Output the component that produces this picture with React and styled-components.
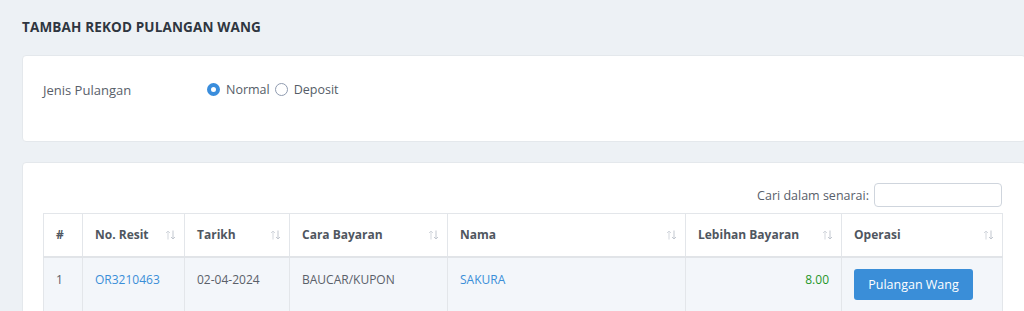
import React from "react";
import styled, { createGlobalStyle } from "styled-components";

const Global = createGlobalStyle`
  html, body { margin: 0; padding: 0; }
  body {
    background: #edf1f5;
    font-family: "Open Sans", "Noto Sans", sans-serif;
    overflow: hidden;
  }
  * { box-sizing: border-box; }
`;

const Page = styled.div`
  padding: 17px 0 0 22px;
  width: 1026px;
`;

const Title = styled.h1`
  margin: 0 0 18px;
  font-size: 13.5px;
  font-weight: 700;
  color: #2f3640;
  letter-spacing: 0.15px;
  line-height: 20px;
`;

const Card = styled.div`
  background: #fff;
  border: 1px solid #e4e8ec;
  border-radius: 4px;
  padding: ${(p) => p.$pad};
  margin-bottom: 20px;
`;

const FormRow = styled.div`
  display: flex;
  align-items: center;
  height: 34px;
`;

const Label = styled.div`
  width: 164px;
  font-size: 13px;
  color: #58606a;
`;

const RadioGroup = styled.div`
  display: flex;
  align-items: center;
  gap: 5px;
  font-size: 12.5px;
  color: #555d68;
  margin-top: -2px;
`;

const RadioOption = styled.label`
  display: flex;
  align-items: center;
  gap: 6px;
`;

const RadioDot = styled.span`
  width: 13px;
  height: 13px;
  border-radius: 50%;
  border: ${(p) => (p.$checked ? "4px solid #3a8ddc" : "1px solid #8f9bb0")};
  background: #fff;
  display: inline-block;
`;

const Toolbar = styled.div`
  width: 959px;
  display: flex;
  justify-content: flex-end;
  align-items: center;
  gap: 5px;
  margin-bottom: 6px;
  font-size: 12.5px;
  color: #58606a;
`;

const SearchInput = styled.input`
  width: 128px;
  height: 24px;
  border: 1px solid #cfd5dd;
  border-radius: 4px;
  outline: none;
`;

const Table = styled.table`
  width: 959px;
  border-collapse: collapse;
  table-layout: fixed;
  font-size: 12px;
`;

const Th = styled.th`
  position: relative;
  height: 43px;
  text-align: left;
  padding: 0 12px;
  font-weight: 700;
  color: #4f5660;
  border: 1px solid #e3e6ea;
  border-bottom: 2px solid #e1e4e8;
  background: #fff;
`;

const SortIcon = styled.svg`
  position: absolute;
  right: 8px;
  top: 50%;
  transform: translateY(-50%);
`;

const Td = styled.td`
  vertical-align: top;
  padding: ${(p) => (p.$button ? "11px" : "13px")} 12px 10px;
  height: 60px;
  border: 1px solid #e3e6ea;
  border-top: none;
  background: #f3f6fa;
  color: ${(p) => p.$color || "#5a6069"};
  text-align: ${(p) => p.$align || "left"};
`;

const Button = styled.button`
  width: 119px;
  height: 31px;
  border: none;
  border-radius: 3px;
  background: #3a8ed8;
  color: #fff;
  font-family: inherit;
  font-size: 12.5px;
  cursor: pointer;
`;

const Sort = () => (
  <SortIcon width="11" height="10" viewBox="0 0 11 10" fill="none" strokeWidth="1">
    <path d="M3 9.5V1M1 3l2-2 2 2" stroke="#d3d7dd" />
    <path d="M8 0.5V9M6 7l2 2 2-2" stroke="#c2c7cf" />
  </SortIcon>
);

const cols = [
  { label: "#", w: 39, sort: false },
  { label: "No. Resit", w: 102, sort: true },
  { label: "Tarikh", w: 105, sort: true },
  { label: "Cara Bayaran", w: 158, sort: true },
  { label: "Nama", w: 238, sort: true },
  { label: "Lebihan Bayaran", w: 156, sort: true },
  { label: "Operasi", w: 161, sort: true },
];

export default function App() {
  return (
    <>
      <Global />
      <Page>
        <Title>TAMBAH REKOD PULANGAN WANG</Title>
        <Card $pad="17px 20px 34px">
          <FormRow>
            <Label>Jenis Pulangan</Label>
            <RadioGroup>
              <RadioOption>
                <RadioDot $checked />
                Normal
              </RadioOption>
              <RadioOption>
                <RadioDot />
                Deposit
              </RadioOption>
            </RadioGroup>
          </FormRow>
        </Card>
        <Card $pad="20px 20px 0">
          <Toolbar>
            Cari dalam senarai:
            <SearchInput type="text" />
          </Toolbar>
          <Table>
            <colgroup>
              {cols.map((c) => (
                <col key={c.label} style={{ width: c.w }} />
              ))}
            </colgroup>
            <thead>
              <tr>
                {cols.map((c) => (
                  <Th key={c.label}>
                    {c.label}
                    {c.sort && <Sort />}
                  </Th>
                ))}
              </tr>
            </thead>
            <tbody>
              <tr>
                <Td>1</Td>
                <Td $color="#3a8ed8">OR3210463</Td>
                <Td>02-04-2024</Td>
                <Td>BAUCAR/KUPON</Td>
                <Td $color="#3a8ed8">SAKURA</Td>
                <Td $color="#1f962a" $align="right">8.00</Td>
                <Td $button>
                  <Button>Pulangan Wang</Button>
                </Td>
              </tr>
            </tbody>
          </Table>
        </Card>
      </Page>
    </>
  );
}
